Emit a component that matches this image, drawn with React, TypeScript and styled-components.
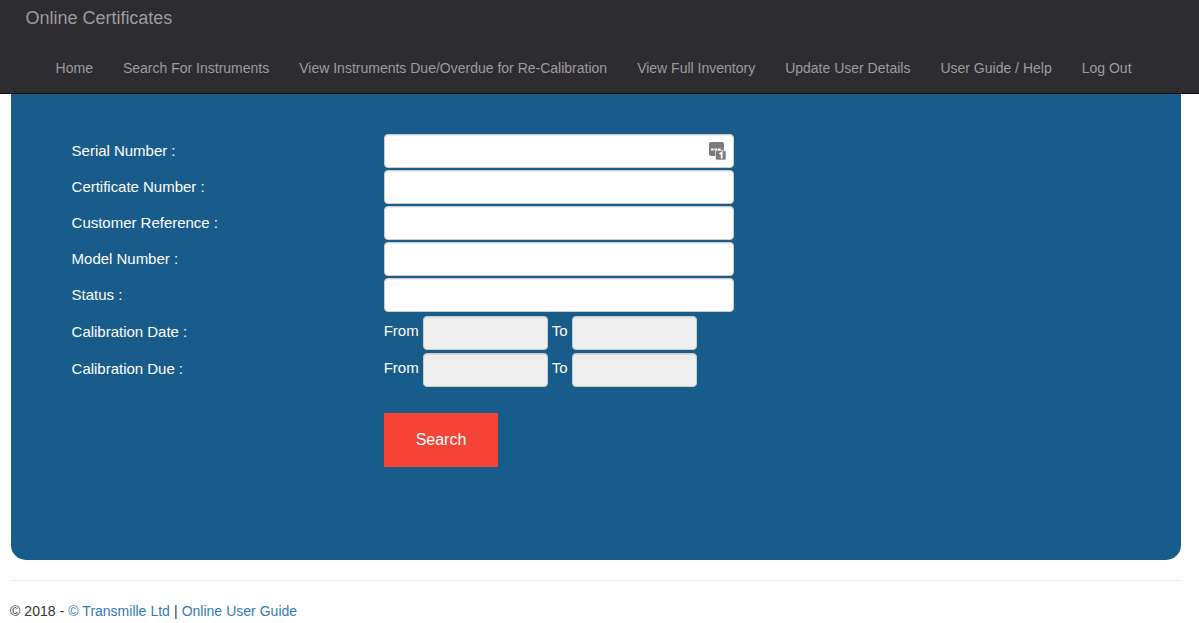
import React from "react";
import styled, { createGlobalStyle } from "styled-components";

const Global = createGlobalStyle`
  html, body { margin: 0; padding: 0; background: #fff; }
  body { font-family: "Liberation Sans", Arial, sans-serif; font-size: 14px; line-height: 20px; color: #333; }
  * { box-sizing: border-box; }
`;

const Navbar = styled.nav`
  height: 94px;
  background: #2d2c30;
  border-bottom: 1px solid #080808;
  padding-left: 26px;
`;
const Brand = styled.div`
  height: 36px;
  font-size: 18px;
  line-height: 36px;
  color: #9d9d9d;
  margin-left: -0.4px;
  letter-spacing: -0.02px;
`;
const NavList = styled.div`
  display: flex;
  margin: 0 0 0 14.6px;
  padding-top: 2px;
`;
const NavLink = styled.a`
  display: block;
  padding: 20px 15px 0;
  color: #9d9d9d;
  white-space: nowrap;
  font-size: 14px;
  line-height: 20px;
`;
const Panel = styled.main`
  margin: 0 18px 0 11px;
  height: 466px;
  background: #185c8c;
  border-radius: 0 0 15px 15px;
  padding: 40px 0 0 61px;
`;
const Row = styled.div<{ $date?: boolean }>`
  display: flex;
  align-items: center;
  height: ${(p) => (p.$date ? 37 : 36)}px;
  color: #fff;
  font-size: 15px;
`;
const Label = styled.div`
  width: 312px;
  flex: none;
  margin-top: -2px;
  text-indent: -0.4px;
  letter-spacing: -0.02px;
`;
const Field = styled.div`
  position: relative;
  width: 350px;
  height: 34px;
  margin-bottom: 2px;
`;
const TextInput = styled.input`
  display: block;
  width: 100%;
  height: 34px;
  background: #fff;
  border: 1px solid #ccc;
  border-radius: 4px;
  box-shadow: inset 0 1px 1px rgba(0, 0, 0, 0.075);
  outline: none;
`;
const KeyIcon = styled.svg`
  position: absolute;
  right: 8px;
  top: 8px;
  width: 17px;
  height: 18px;
`;
const DateText = styled.span`
  margin-right: 4px;
  position: relative;
  top: -2px;
  left: -0.3px;
`;
const DateInput = styled.input`
  display: block;
  width: 125px;
  height: 34px;
  background: #eee;
  border: 1px solid #ccc;
  border-radius: 4px;
  outline: none;
  margin-right: 4px;
  box-shadow: inset 0 1px 1px rgba(0, 0, 0, 0.075);
`;
const ButtonRow = styled.div`
  padding: 25px 0 0 312px;
`;
const SearchButton = styled.button`
  display: block;
  width: 114px;
  height: 54px;
  background: #f44336;
  border: 0;
  color: #fff;
  font-family: inherit;
  font-size: 16px;
  padding: 0;
`;
const Footer = styled.footer`
  margin: 20px 18px 0 11px;
  border-top: 1px solid #eee;
  padding-top: 20px;
  color: #333;
  font-size: 14px;
  line-height: 20px;
  text-indent: -1px;
  word-spacing: 0.15px;
`;
const FootLink = styled.a`
  color: #337ab7;
`;

const navItems = [
  "Home",
  "Search For Instruments",
  "View Instruments Due/Overdue for Re-Calibration",
  "View Full Inventory",
  "Update User Details",
  "User Guide / Help",
  "Log Out",
];
const textRows = ["Serial Number :", "Certificate Number :", "Customer Reference :", "Model Number :", "Status :"];
const dateRows = ["Calibration Date :", "Calibration Due :"];

export default function App() {
  return (
    <>
      <Global />
      <Navbar>
        <Brand>Online Certificates</Brand>
        <NavList>
          {navItems.map((n) => (
            <NavLink key={n}>{n}</NavLink>
          ))}
        </NavList>
      </Navbar>
      <Panel>
        {textRows.map((r, i) => (
          <Row key={r}>
            <Label>{r}</Label>
            <Field>
              <TextInput />
              {i === 0 && (
                <KeyIcon viewBox="0 0 17 18">
                  <rect x="0" y="0" width="15" height="14" rx="2" fill="#7b7b7b" />
                  <rect x="2" y="6.5" width="2.6" height="2" fill="#fff" />
                  <rect x="5.5" y="6.5" width="2.6" height="2" fill="#fff" />
                  <rect x="9" y="6.5" width="2.6" height="2" fill="#fff" />
                  <rect x="6.5" y="8.5" width="10.5" height="9.5" rx="1.5" fill="#7b7b7b" stroke="#fff" strokeWidth="0.6" />
                  <path d="M10.5 12l2.2-1.3V16.5" fill="none" stroke="#fff" strokeWidth="1.8" />
                </KeyIcon>
              )}
            </Field>
          </Row>
        ))}
        {dateRows.map((r) => (
          <Row key={r} $date>
            <Label>{r}</Label>
            <DateText>From</DateText>
            <DateInput />
            <DateText>To</DateText>
            <DateInput />
          </Row>
        ))}
        <ButtonRow>
          <SearchButton>Search</SearchButton>
        </ButtonRow>
      </Panel>
      <Footer>
        © 2018 - <FootLink>© Transmille Ltd</FootLink> | <FootLink>Online User Guide</FootLink>
      </Footer>
    </>
  );
}
